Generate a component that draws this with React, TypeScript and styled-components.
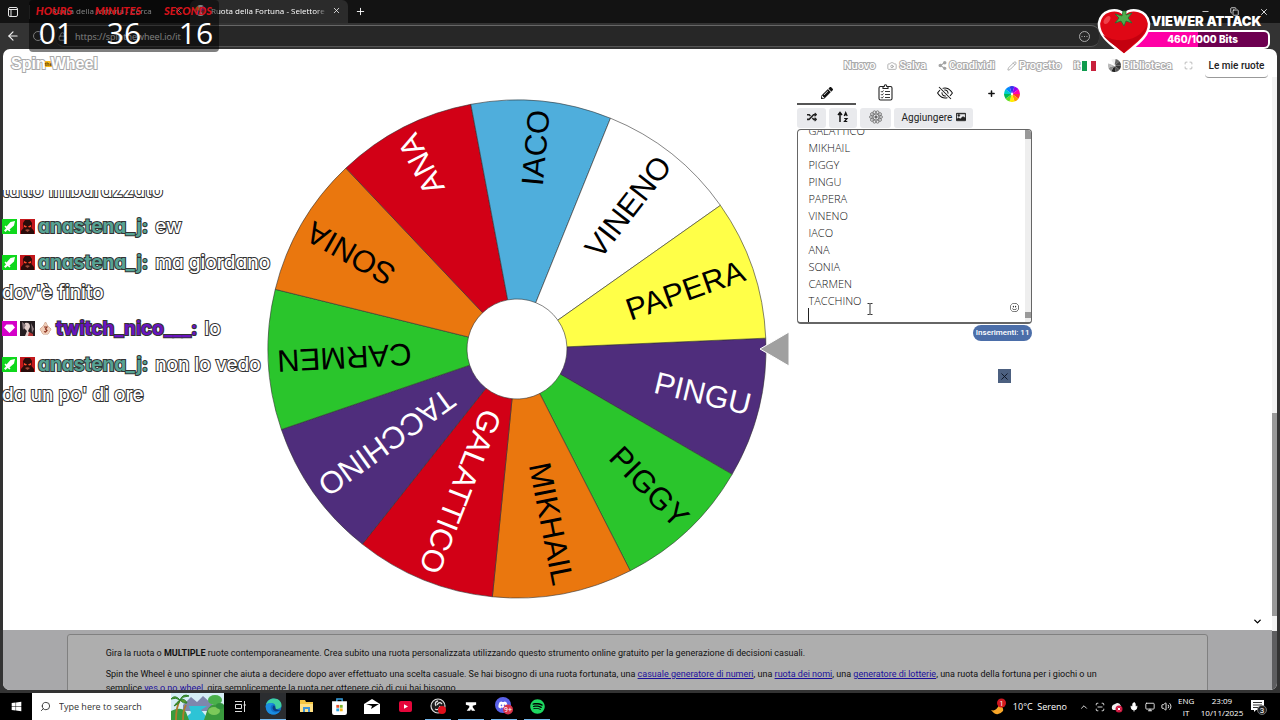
import React, { useEffect, useRef } from "react";
import styled, { createGlobalStyle } from "styled-components";
import { FaPencilAlt, FaRandom, FaShareAlt, FaSpotify, FaDiscord, FaWindows } from "react-icons/fa";
import { BsEyeSlash, BsCardImage, BsEmojiSmile } from "react-icons/bs";
import {
  ArrowLeft, RotateCw, Lock, Plus, X, Minus, Copy, Camera, Pencil, Maximize,
  ChevronDown, ChevronUp, Search, Volume2, Mic, Monitor, ScanLine,
} from "lucide-react";

const Global = createGlobalStyle`
  *, *::before, *::after { box-sizing: border-box; }
  body { margin: 0; background: #1b1b1d; font-family: Roboto, "Liberation Sans", sans-serif; }
  button, input, textarea { font: inherit; color: inherit; margin: 0; padding: 0; border: 0; background: none; }
  svg { display: block; flex: none; }
  p { margin: 0; }
`;

const Desktop = styled.div`
  position: relative;
  min-height: 100vh;
  display: flex;
  flex-direction: column;
  overflow: hidden;
`;

/* ---------- browser chrome ---------- */

const TabStrip = styled.div`
  height: 23px;
  display: flex;
  align-items: center;
  background: #131313;
  color: #fff;
  font: 8px "Open Sans", sans-serif;
  padding-left: 8px;
`;

const TabMenu = styled.div`
  width: 22px;
  height: 14px;
  display: flex;
  align-items: center;
  border-right: 1px solid #3a3a3a;
`;

const Tab = styled.div<{ $active?: boolean; $width: number }>`
  width: ${(p) => p.$width}px;
  height: 23px;
  display: flex;
  align-items: center;
  gap: 5px;
  padding: 0 7px 2px ${(p) => (p.$active ? 5 : 22)}px;
  border-radius: 6px 6px 0 0;
  background: ${(p) => (p.$active ? "#2b2b2b" : "transparent")};
  white-space: nowrap;
`;

const TabTitle = styled.span`
  flex: 1;
  overflow: hidden;
  mask-image: linear-gradient(90deg, #000 90%, transparent);
`;

const IconButton = styled.button`
  display: flex;
  align-items: center;
  justify-content: center;
`;

const NewTab = styled(IconButton)`
  margin-left: 7px;
`;

const WindowButtons = styled.div`
  margin-left: auto;
  display: flex;
  gap: 20px;
  padding-right: 11px;
`;

const AddressBar = styled.div`
  height: 26px;
  display: flex;
  align-items: center;
  gap: 12px;
  padding: 0 14px 0 6px;
  background: #333;
  color: #f0f0f0;
`;

const AddressField = styled.label`
  flex: 1;
  height: 22px;
  display: flex;
  align-items: center;
  gap: 8px;
  padding: 0 9px 0 2px;
  margin-right: 167px;
  border-top: 1px solid #666;
  border-bottom: 1px solid #555;
  border-radius: 8px;
  background: #272727;
`;

const AddressInput = styled.input`
  flex: 1;
  min-width: 0;
  font: 9px "Open Sans", sans-serif;
  color: #fff;
`;

/* ---------- page ---------- */

const Bezel = styled.div`
  flex: 1;
  display: flex;
  padding: 0 3px 3px;
  background: #333;
`;

const Page = styled.div`
  position: relative;
  flex: 1;
  min-width: 0;
  display: flex;
  flex-direction: column;
  border-radius: 7px;
  overflow: hidden;
  background: #fff;
`;

const Header = styled.header`
  height: 33px;
  display: flex;
  align-items: center;
  justify-content: space-between;
  padding: 0 9px 0 8px;
`;

const outline = `
  color: #fff;
  -webkit-text-stroke: 2px #aaa;
  paint-order: stroke fill;
`;

const Brand = styled.a`
  display: flex;
  align-items: center;
  font: bold 16px "Liberation Sans", sans-serif;
  text-decoration: none;
  padding-bottom: 4px;
  ${outline}
`;

const BrandThe = styled.small`
  width: 7px;
  margin: 0 -1px;
  font: bold 5px "Liberation Sans", sans-serif;
  color: #5b3a00;
  background: #f5b81c;
  -webkit-text-stroke: 0;
`;

const Nav = styled.nav`
  display: flex;
  align-items: center;
  gap: 12px;
`;

const NavLink = styled.a`
  display: flex;
  align-items: center;
  gap: 2px;
  font-size: 11px;
  font-weight: 500;
  text-decoration: none;
  ${outline}
  svg { color: #a4a4a4; }
`;

const Flag = styled.span`
  width: 14px;
  height: 10px;
  background: linear-gradient(90deg, #0f9b4e 33%, #fff 33% 66%, #c8203c 66%);
`;

const MyWheels = styled.button`
  width: 63px;
  height: 24px;
  border-radius: 4px;
  border-bottom: 1px solid #999;
  font-size: 10px;
  font-weight: 500;
  color: #222;
  white-space: nowrap;
`;

const Main = styled.main`
  flex: 1;
  display: flex;
  align-items: flex-start;
  gap: 8px;
  padding-left: 20.6%;
`;

const WheelSvg = styled.svg`
  width: 524px;
  height: 504px;
  margin-top: 15px;
`;

const Panel = styled.section`
  width: 235px;
  display: flex;
  flex-direction: column;
  color: #111;
`;

const PanelTabs = styled.div`
  display: flex;
  height: 23px;
  margin-bottom: 3px;
`;

const PanelTab = styled.button<{ $active?: boolean }>`
  width: 59px;
  display: flex;
  align-items: center;
  justify-content: center;
  border-bottom: 2px solid ${(p) => (p.$active ? "#555" : "transparent")};
`;

const AddWheel = styled.button`
  flex: 1;
  display: flex;
  align-items: center;
  gap: 8px;
  padding-left: 13px;
`;

const ToolRow = styled.div`
  display: flex;
  gap: 3px;
  height: 20px;
`;

const ToolButton = styled.button<{ $width: number }>`
  width: ${(p) => p.$width}px;
  display: flex;
  align-items: center;
  justify-content: center;
  gap: 4px;
  padding-bottom: 2px;
  border-radius: 3px;
  background: #e9eaed;
  font-size: 10px;
  color: #222;
`;

const EntriesBox = styled.div`
  position: relative;
  height: 195px;
  margin-top: 1px;
  border: 1px solid #666;
  border-bottom-width: 2px;
  border-radius: 4px;
  overflow: hidden;
`;

const Entries = styled.textarea`
  display: block;
  width: 100%;
  height: 100%;
  padding: 4px 10px 0;
  resize: none;
  outline: none;
  scrollbar-width: none;
  font: 300 11px/17px "Open Sans", sans-serif;
  color: #111;
  caret-color: transparent;
`;

const EntriesTrack = styled.span`
  position: absolute;
  top: 0;
  right: 0;
  bottom: 0;
  width: 6px;
  background: linear-gradient(#999 9px, #eee 9px 182px, #999 182px 188px, #eee 188px);
`;

const Caret = styled.span`
  position: absolute;
  left: 10px;
  bottom: 0;
  width: 1px;
  height: 14px;
  background: #222;
`;

const Emoji = styled.button`
  position: absolute;
  right: 12px;
  bottom: 10px;
`;

const Pointer = styled.svg`
  position: absolute;
  left: 69px;
  bottom: 7px;
`;

const Count = styled.span`
  align-self: flex-end;
  height: 16px;
  margin-top: 1px;
  padding: 0 3px;
  border-radius: 8px;
  background: #4b6ea9;
  color: #fff;
  font: 500 8px/16px Roboto, sans-serif;
`;

const CloseAd = styled.button`
  align-self: flex-end;
  width: 13px;
  height: 14px;
  margin: 28px 21px 0 0;
  display: flex;
  align-items: center;
  justify-content: center;
  background: #4c6080;
  color: #0b1220;
`;

const Expand = styled.button`
  position: absolute;
  right: 14px;
  bottom: 63px;
`;

const PageScroll = styled.span`
  position: absolute;
  top: 28px;
  right: 0;
  bottom: 0;
  width: 5px;
  background: linear-gradient(#f3f3f3 336px, #999 336px 539px, #f3f3f3 539px 554px, #5e5e60 554px);
`;

const Info = styled.section`
  height: 60px;
  padding: 4px 5.4% 0 5%;
  background: #a8a8aa;
  overflow: hidden;
`;

const InfoCard = styled.div`
  height: 70px;
  padding: 11px 96px 0 38px;
  border: 1px solid #808080;
  border-radius: 3px;
  background: #aeaeae;
  color: #111;
  font-size: 9px;
  line-height: 14px;
  p + p { margin-top: 7px; }
  a { color: #1c109c; }
`;

/* ---------- stream overlays ---------- */

const Timer = styled.div`
  position: absolute;
  top: 0;
  left: 29px;
  width: 190px;
  height: 52px;
  padding-top: 3px;
  border-radius: 4px;
  background: rgba(0, 0, 0, 0.5);
`;

const TimerLabels = styled.div`
  display: grid;
  grid-template-columns: 50px 78px 62px;
  justify-items: center;
  font: italic 900 11px/15px Lato, sans-serif;
  color: #d4121a;
`;

const TimerValues = styled.div`
  display: grid;
  grid-template-columns: 54px 82px 62px;
  justify-items: center;
  font: 30px/30px "Open Sans", sans-serif;
  color: #fff;
`;

const Attack = styled.div`
  position: absolute;
  top: 8px;
  right: 10px;
  display: flex;
  align-items: flex-start;
`;

const AttackBody = styled.div`
  width: 140px;
  margin-left: -21px;
  padding-top: 5px;
`;

const AttackTitle = styled.div`
  padding-left: 21px;
  white-space: nowrap;
  font: 900 13px/17px Inter, sans-serif;
  color: #fff;
`;

const AttackBar = styled.div`
  height: 19px;
  border: 2px solid #fff;
  border-left: 0;
  border-radius: 0 6px 6px 0;
  background: linear-gradient(90deg, #ff00a6 49%, #6d0050 49%);
  color: #fff;
  font: 800 10px/15px Inter, sans-serif;
  text-align: center;
  padding-left: 7px;
`;

const Tomato = styled.svg`
  position: relative;
  z-index: 1;
`;

const Chat = styled.div`
  position: absolute;
  top: 190px;
  left: 2px;
  width: 276px;
  height: 220px;
  display: flex;
  flex-direction: column;
  justify-content: flex-end;
  gap: 6px;
  overflow: hidden;
  font: 500 19px/30px Inter, sans-serif;
  font-feature-settings: "cv11";
  color: #fff;
  -webkit-text-stroke: 2px #333;
  paint-order: stroke fill;
`;

const Message = styled.p`
  white-space: pre-line;
`;

const User = styled.b<{ $color: string }>`
  margin-right: 2px;
  font-weight: 700;
  color: ${(p) => p.$color};
`;

const Badge = styled.svg`
  display: inline-block;
  vertical-align: -1px;
  margin-right: 3px;
`;

/* ---------- taskbar ---------- */

const Taskbar = styled.footer`
  height: 27px;
  display: flex;
  align-items: stretch;
  background: #000;
  color: #fff;
  font: 9px "Open Sans", sans-serif;
`;

const TaskButton = styled.button<{ $open?: boolean; $focus?: boolean }>`
  width: 26px;
  margin-right: 7px;
  display: flex;
  align-items: center;
  justify-content: center;
  border-bottom: 1px solid ${(p) => (p.$open ? "#76b9ed" : "transparent")};
  background: ${(p) => (p.$focus ? "#2b2d30" : "none")};
`;

const StartButton = styled.button`
  width: 26px;
  margin: 0 3px;
  display: flex;
  align-items: center;
  justify-content: center;
`;

const SearchBox = styled.label`
  width: 192px;
  margin-right: 3px;
  display: flex;
  align-items: center;
  gap: 8px;
  padding-left: 8px;
  background: #fff;
  color: #333;
`;

const SearchInput = styled.input`
  flex: 1;
  min-width: 0;
  font-size: 9px;
  &::placeholder { color: #333; opacity: 1; }
`;

const Tray = styled.div`
  margin-left: auto;
  display: flex;
  align-items: center;
  gap: 6px;
  padding-right: 13px;
`;

const Stack = styled.span<{ $width: number }>`
  width: ${(p) => p.$width}px;
  text-align: center;
  font-size: 8px;
  line-height: 12px;
`;

const Weather = styled.span`
  margin-right: 6px;
  white-space: pre;
`;

/* ---------- drawings ---------- */

const SLICES = [
  { name: "PINGU", fill: "#4f2d7c", ink: "#fff" },
  { name: "PIGGY", fill: "#2ac52c", ink: "#000" },
  { name: "MIKHAIL", fill: "#ea770e", ink: "#000" },
  { name: "GALATTICO", fill: "#d20016", ink: "#fff" },
  { name: "TACCHINO", fill: "#4f2d7c", ink: "#fff" },
  { name: "CARMEN", fill: "#2ac52c", ink: "#000" },
  { name: "SONIA", fill: "#ea770e", ink: "#000" },
  { name: "ANA", fill: "#d20016", ink: "#fff" },
  { name: "IACO", fill: "#4faedc", ink: "#000" },
  { name: "VINENO", fill: "#ffffff", ink: "#000" },
  { name: "PAPERA", fill: "#ffff48", ink: "#000" },
];

const polar = (r: number, deg: number) => {
  const a = (deg * Math.PI) / 180;
  return `${(r * Math.cos(a)).toFixed(2)} ${(r * Math.sin(a)).toFixed(2)}`;
};

function Wheel() {
  const step = 360 / SLICES.length;
  const start = -2.5;
  return (
    <WheelSvg viewBox="-252 -252 524 504" role="img" aria-label="Ruota">
      {SLICES.map((s, i) => {
        const a = start + i * step;
        return (
          <path
            key={s.name}
            d={`M${polar(50, a)}L${polar(249, a)}A249 249 0 0 1 ${polar(249, a + step)}L${polar(50, a + step)}A50 50 0 0 0 ${polar(50, a)}Z`}
            fill={s.fill}
            stroke="#333"
            strokeWidth="0.6"
          />
        );
      })}
      {SLICES.map((s, i) => (
        <text
          key={s.name}
          x="240"
          y="11"
          textAnchor="end"
          fontFamily="Liberation Sans, Arial, sans-serif"
          fontSize="31"
          fill={s.ink}
          transform={`rotate(${start + (i + 0.5) * step - 0.5})`}
        >
          {s.name}
        </text>
      ))}
      <path d="M243 0L272-17V17Z" fill="#a0a0a0" stroke="#fff" strokeWidth="1" />
    </WheelSvg>
  );
}

const HUES = ["#f33", "#f90", "#fe0", "#6d2", "#0b5", "#0cc", "#08f", "#33e", "#90e", "#f0a"];

function Pinwheel({ size, colors }: { size: number; colors: string[] }) {
  const step = 360 / colors.length;
  return (
    <svg width={size} height={size} viewBox="-10 -10 20 20">
      {colors.map((c, i) => (
        <path key={i} d={`M0 0L${polar(10, i * step)}A10 10 0 0 1 ${polar(10, (i + 1) * step)}Z`} fill={c} />
      ))}
      <circle r="1.5" fill="#fff" />
    </svg>
  );
}

const SwordBadge = () => (
  <Badge width="15" height="15" viewBox="0 0 15 15">
    <rect width="15" height="15" fill="#0fd81c" />
    <path d="M13 2L8.500 3 4.500 7.500 3.500 6.500 2.500 7.500 4 9.500 2 11.500 3.500 13 5.500 11 7.500 12.500 8.500 11.500 7.500 10.500 12 6.500Z" fill="#fff" />
  </Badge>
);

const MaskBadge = () => (
  <Badge width="15" height="15" viewBox="0 0 15 15">
    <rect width="15" height="15" fill="#c3181c" />
    <path d="M3 4L5 1H10L12 4 11.500 9 14 12V15H1V12L3.500 9Z" fill="#2a0c0a" />
    <path d="M4 6L7 7.500 6 8.500 4 8ZM11 6L8 7.500 9 8.500 11 8Z" fill="#ff4a2a" />
    <path d="M5 11Q7.500 9.500 10 11L7.500 13Z" fill="#a04a38" />
  </Badge>
);

const GemBadge = () => (
  <Badge width="15" height="15" viewBox="0 0 15 15">
    <rect width="15" height="15" fill="#d400c8" />
    <path d="M4.500 3.500H10.500L13 6.500 7.500 12 2 6.500Z" fill="#fff" />
  </Badge>
);

const PortraitBadge = () => (
  <Badge width="15" height="15" viewBox="0 0 15 15">
    <rect width="15" height="15" fill="#241d20" />
    <path d="M5 2Q10 1 10 6L8 10 12 15H5L7 10 4 7Z" fill="#e3cfcb" />
    <path d="M2 1L6 4 3 9ZM11 2L14 8 12 12Z" fill="#8d7d80" />
    <path d="M9 11L13 13V15H8Z" fill="#b23434" />
  </Badge>
);

const FlameBadge = () => (
  <Badge width="15" height="15" viewBox="0 0 15 15">
    <path d="M7.500 1L9.500 5 13 8 10 13H5L2 8 5.500 5Z" fill="#f0cdb8" stroke="#b57a5c" strokeWidth="0.8" />
    <path d="M6 6H9L7.500 8 9 9.500 7.500 11 6 10.500" fill="none" stroke="#8a3320" strokeWidth="1.200" />
  </Badge>
);

const ChecklistIcon = () => (
  <svg width="15" height="17" viewBox="0 0 15 17" fill="none" stroke="#222" strokeWidth="1.100">
    <rect x="1" y="2.500" width="13" height="13.500" rx="1.500" />
    <path d="M5 4.500V2.500H6.200Q6.200 0.800 7.500 0.800T8.800 2.500H10V4.500Z" fill="#fff" />
    <path d="M3 7.200L4 8.200 5.500 6.500M3 10.200L4 11.200 5.500 9.500M3 13.200L4 14.200 5.500 12.500M7 7.500H12M7 10.500H12M7 13.500H12" strokeWidth="0.900" />
  </svg>
);

const SortIcon = () => (
  <svg width="12" height="12" viewBox="0 0 12 12" fill="none" stroke="#111" strokeWidth="1.500">
    <path d="M3 11V2M1 4L3 1.500 5 4" />
    <path d="M7.200 5L8.700 1.500 10.200 5M7.800 4H9.600M7.200 7.500H10L7.500 10.500H10.300" strokeWidth="1.200" />
  </svg>
);

const FlowerIcon = () => (
  <svg width="14" height="14" viewBox="-7 -7 14 14" fill="none" stroke="#666" strokeWidth="0.8">
    {Array.from({ length: 10 }, (_, i) => (
      <circle key={i} r="1.400" cx={5 * Math.cos((i * Math.PI) / 5)} cy={5 * Math.sin((i * Math.PI) / 5)} />
    ))}
    <circle r="3" />
    <circle r="1.200" fill="#666" />
  </svg>
);

const TomatoArt = () => (
  <Tomato width="54" height="49" viewBox="0 0 54 49">
    <path d="M27 6C19-1 4 2 2 15 1 29 17 38 27 47 37 38 53 29 52 15 50 2 35-1 27 6Z" fill="#df0715" stroke="#fff" strokeWidth="2.500" />
    <path d="M50 17C48 30 34 37 27 45 19 38 11 34 6 27 20 36 42 34 50 17Z" fill="#c4000f" />
    <ellipse cx="10" cy="12" rx="2.500" ry="4.500" transform="rotate(35 10 12)" fill="#f0404a" />
    <path d="M26 3L29 3 29 7 35 5 31 10 35 15 29 13 27 18 24 13 18 15 22 10 18 6 25 8Z" fill="#4fae4b" stroke="#1e7231" strokeWidth="0.8" />
  </Tomato>
);

const SearchScene = () => (
  <svg width="53" height="27" viewBox="0 0 53 27">
    <rect width="53" height="27" fill="#d5edf6" />
    <path d="M12 12L20 4 26 9 32 3 42 12V18H12Z" fill="#7f87ad" />
    <path d="M18 13H36L30 17 38 27H12L20 20Z" fill="#2dc4d6" />
    <path d="M0 18Q10 13 15 19L18 27H0ZM53 12Q40 8 36 18L33 27H53Z" fill="#3a9a3d" />
    <path d="M5 27Q5 14 9 7M12 27Q12 17 15 12" stroke="#b07b2b" strokeWidth="1.800" fill="none" />
    <path d="M9 7Q4 1 0 6 5 4 9 7 6 9 3 13 9 11 9 7 12 11 16 10 14 5 9 7 12 0 18 3 12 3 9 7Z" fill="#5b9a2b" stroke="#2b7f2b" />
    <ellipse cx="44" cy="7" rx="7" ry="5" fill="#49b04b" />
    <ellipse cx="43" cy="18" rx="6" ry="4" fill="#7cc95a" />
    <ellipse cx="49" cy="13" rx="4" ry="3" fill="#2f8f3c" />
  </svg>
);

const EdgeIcon = () => (
  <svg width="17" height="17" viewBox="0 0 17 17">
    <circle cx="8.500" cy="8.500" r="8" fill="#0f6fc9" />
    <path d="M1 7C2 2 6 .5 9 .5 14 .5 16.500 4 16.500 7 16.500 10 14 11 11 11 9.500 11 10.500 9.500 10.500 8.500 10.500 6 8 5 6 5 3.500 5 2 6 1 7Z" fill="#3fd0a0" />
    <path d="M1 7C3 4 8 4.500 9 6.500 6 6 5 9 6 11.500 7 14.500 11 15.500 15 13 12 17.500 6 17.500 3 14.500 1 12 .5 9 1 7Z" fill="#1b8de0" />
    <path d="M9 7.500C7 8 7 12 10 13 12 13.500 14 13 15.500 12 13 12 10 11.500 10.300 9Z" fill="#0b3d7e" />
  </svg>
);

const FolderIcon = () => (
  <svg width="15" height="14" viewBox="0 0 15 14">
    <path d="M1 1H6L7 3H14V13H1Z" fill="#f4c542" />
    <path d="M1 5H14V13H1Z" fill="#ffe084" />
    <path d="M4 13V8H11V13H9V10H6V13Z" fill="#3f94d6" />
  </svg>
);

const StoreIcon = () => (
  <svg width="15" height="17" viewBox="0 0 14 16">
    <path d="M4.500 4V1H9.500V4" fill="none" stroke="#37a0e0" strokeWidth="1.300" />
    <path d="M0 3H14V14Q14 16 12 16H2Q0 16 0 14Z" fill="#fff" />
    <path d="M4 6.500H6.700V9.200H4Z" fill="#e8502d" /><path d="M7.300 6.500H10V9.200H7.300Z" fill="#7db72f" />
    <path d="M4 9.800H6.700V12.500H4Z" fill="#29a3e2" /><path d="M7.300 9.800H10V12.500H7.300Z" fill="#f8b617" />
  </svg>
);

const MailIcon = () => (
  <svg width="18" height="15" viewBox="0 0 18 15">
    <path d="M1 5L9 0 17 5V15H1Z" fill="#fff" />
    <path d="M3 5H16L8 10 9 7Z" fill="#000" />
  </svg>
);

const YouTubeIcon = () => (
  <svg width="13" height="11" viewBox="0 0 13 11">
    <rect width="13" height="11" rx="2" fill="#e5063a" />
    <path d="M5 3.300L9 5.500 5 7.700Z" fill="#fff" />
  </svg>
);

const ObsIcon = () => (
  <svg width="17" height="17" viewBox="0 0 17 17">
    <circle cx="8" cy="8" r="7" fill="#1c1c1c" stroke="#ddd" strokeWidth="1.200" />
    <path d="M8 3Q4 4 6 8M12 6Q9 3 7 7M5 11Q9 13 10 8" stroke="#ddd" strokeWidth="1.300" fill="none" />
    <circle cx="12" cy="12" r="4" fill="#e0101c" />
  </svg>
);

const HammerIcon = () => (
  <svg width="12" height="11" viewBox="0 0 14 12" fill="#fff">
    <path d="M1 1H13V4L9 5V7L12 11H8L7 9 6 11H2L5 7V5L1 4Z" />
  </svg>
);

const DiscordBadge = () => (
  <svg width="18" height="18" viewBox="0 0 18 18">
    <circle cx="8" cy="8" r="8" fill="#5a62e8" />
    <FaDiscord x="3" y="3" size={10} color="#fff" />
    <circle cx="13" cy="12.500" r="5" fill="#d8324a" />
    <text x="13" y="15" fontSize="7" fontFamily="Roboto" textAnchor="middle" fill="#fff">9+</text>
  </svg>
);

const MoonIcon = () => (
  <svg width="17" height="18" viewBox="0 0 17 18">
    <path d="M1 12Q6 14 9 7 14 9 13 13 7 20 1 12Z" fill="#f8a628" />
    <circle cx="11.500" cy="5" r="4.500" fill="#d01720" />
    <text x="11.500" y="7.500" fontSize="7" fontFamily="Roboto" textAnchor="middle" fill="#fff">1</text>
  </svg>
);

const CloudIcon = () => (
  <svg width="12" height="12" viewBox="0 0 12 12">
    <path d="M1 8Q0 4 4 3 8 0 10 5V9H2Z" fill="#eee" />
    <circle cx="8" cy="8" r="3.500" fill="#d01840" />
    <path d="M6.800 6.800L9.200 9.200M9.200 6.800L6.800 9.200" stroke="#fff" />
  </svg>
);

const NoticeIcon = () => (
  <svg width="17" height="17" viewBox="0 0 17 17">
    <path d="M1 2H14V12H6L4 14V12H1Z" fill="#fff" />
    <path d="M3 4.500H12M3 7H12M3 9.500H8" stroke="#333" />
    <circle cx="12" cy="12" r="4.500" fill="#222" stroke="#888" strokeWidth="0.8" />
    <text x="12" y="15" fontSize="8" fontFamily="Roboto" textAnchor="middle" fill="#fff">3</text>
  </svg>
);

const ENTRIES = "GALATTICO\nMIKHAIL\nPIGGY\nPINGU\nPAPERA\nVINENO\nIACO\nANA\nSONIA\nCARMEN\nTACCHINO\n";

export default function App() {
  const entries = useRef<HTMLTextAreaElement>(null);
  useEffect(() => {
    if (entries.current) entries.current.scrollTop = 12;
  }, []);

  return (
    <Desktop>
      <Global />
      <TabStrip>
        <TabMenu>
          <svg width="10" height="10" viewBox="0 0 10 10" fill="none" stroke="#e4e4e4">
            <rect x="0.500" y="0.500" width="9" height="9" rx="1.500" />
            <path d="M1 2.500H9M3 3V9" />
          </svg>
        </TabMenu>
        <Tab $width={160}>
          <TabTitle>Ruota della fortuna - Cerca</TabTitle>
          <IconButton aria-label="Chiudi scheda"><X size={9} /></IconButton>
        </Tab>
        <Tab $width={158} $active>
          <Pinwheel size={11} colors={["#d33", "#fff", "#36c", "#fb3", "#fff", "#c3a"]} />
          <TabTitle>Ruota della Fortuna - Selettore Per</TabTitle>
          <IconButton aria-label="Chiudi scheda"><X size={9} /></IconButton>
        </Tab>
        <NewTab aria-label="Nuova scheda"><Plus size={11} /></NewTab>
        <WindowButtons>
          <IconButton aria-label="Riduci"><Minus size={9} /></IconButton>
          <IconButton aria-label="Ripristina"><Copy size={9} /></IconButton>
          <IconButton aria-label="Chiudi"><X size={10} /></IconButton>
        </WindowButtons>
      </TabStrip>
      <AddressBar>
        <IconButton aria-label="Indietro"><ArrowLeft size={14} /></IconButton>
        <IconButton aria-label="Ricarica"><RotateCw size={12} /></IconButton>
        <AddressField>
          <Lock size={9} />
          <AddressInput aria-label="Indirizzo" defaultValue="https://spinthewheel.io/it" />
          <svg width="11" height="11" viewBox="0 0 11 11" fill="none" stroke="#aaa">
            <circle cx="5.500" cy="5.500" r="5" />
            <path d="M2.500 5.500H8.500" strokeDasharray="1 1.500" />
          </svg>
        </AddressField>
      </AddressBar>

      <Bezel>
        <Page>
          <Header>
            <Brand href="#">Spin<BrandThe>the</BrandThe>Wheel</Brand>
            <Nav>
              <NavLink href="#">Nuovo</NavLink>
              <NavLink href="#"><Camera size={10} />Salva</NavLink>
              <NavLink href="#"><FaShareAlt size={9} />Condividi</NavLink>
              <NavLink href="#"><Pencil size={10} />Progetto</NavLink>
              <NavLink href="#">it<Flag /></NavLink>
              <NavLink href="#">
                <Pinwheel size={13} colors={["#333", "#555", "#222", "#888", "#bbb", "#fff", "#eee", "#666", "#444"]} />
                Biblioteca
              </NavLink>
              <NavLink href="#" aria-label="Schermo intero"><Maximize size={9} /></NavLink>
              <MyWheels>Le mie ruote</MyWheels>
            </Nav>
          </Header>
          <Main>
            <Wheel />
            <Panel>
              <PanelTabs>
                <PanelTab $active aria-label="Modifica"><FaPencilAlt size={12} /></PanelTab>
                <PanelTab aria-label="Risultati"><ChecklistIcon /></PanelTab>
                <PanelTab aria-label="Nascondi"><BsEyeSlash size={16} /></PanelTab>
                <AddWheel aria-label="Aggiungi ruota">
                  <Plus size={9} strokeWidth={4} />
                  <Pinwheel size={16} colors={HUES} />
                </AddWheel>
              </PanelTabs>
              <ToolRow>
                <ToolButton $width={29} aria-label="Mescola"><FaRandom size={10} /></ToolButton>
                <ToolButton $width={28} aria-label="Ordina"><SortIcon /></ToolButton>
                <ToolButton $width={31} aria-label="Impostazioni"><FlowerIcon /></ToolButton>
                <ToolButton $width={79}>Aggiungere <BsCardImage size={10} strokeWidth={1} /></ToolButton>
              </ToolRow>
              <EntriesBox>
                <Entries ref={entries} aria-label="Inserimenti" defaultValue={ENTRIES} spellCheck={false} />
                <Caret />
                <Pointer width="6" height="12" viewBox="0 0 6 12" fill="none" stroke="#333">
                  <path d="M0.500 0.500H2.500L3 1 3.500 0.500H5.500M3 1V11M0.500 11.500H2.500L3 11 3.500 11.500H5.500" />
                </Pointer>
                <Emoji aria-label="Emoji"><BsEmojiSmile size={9} /></Emoji>
                <EntriesTrack />
              </EntriesBox>
              <Count>Inserimenti: 11</Count>
              <CloseAd aria-label="Chiudi"><X size={11} /></CloseAd>
            </Panel>
          </Main>
          <Info>
            <InfoCard>
              <p>
                Gira la ruota o <b>MULTIPLE</b> ruote contemporaneamente. Crea subito una ruota personalizzata
                utilizzando questo strumento online gratuito per la generazione di decisioni casuali.
              </p>
              <p>
                Spin the Wheel è uno spinner che aiuta a decidere dopo aver effettuato una scelta casuale. Se hai
                bisogno di una ruota fortunata, una <a href="#">casuale generatore di numeri</a>, una{" "}
                <a href="#">ruota dei nomi</a>, una <a href="#">generatore di lotterie</a>, una ruota della fortuna
                per i giochi o un semplice <a href="#">yes o no wheel</a>, gira semplicemente la ruota per ottenere
                ciò di cui hai bisogno.
              </p>
            </InfoCard>
          </Info>
          <Expand aria-label="Espandi"><ChevronDown size={11} strokeWidth={3} /></Expand>
          <PageScroll />
        </Page>
      </Bezel>

      <Taskbar>
        <StartButton aria-label="Start"><FaWindows size={11} /></StartButton>
        <SearchBox>
          <Search size={11} transform="scale(-1 1)" />
          <SearchInput placeholder="Type here to search" aria-label="Type here to search" />
          <SearchScene />
        </SearchBox>
        <TaskButton aria-label="Task view">
          <svg width="11" height="11" viewBox="0 0 11 11" fill="none" stroke="#ddd">
            <path d="M0 .5H7M0 10.500H7M.5 3.500H6.500V7.500H.5ZM9.500 0V11M8.500 4H11" />
          </svg>
        </TaskButton>
        <TaskButton aria-label="Edge" $open $focus><EdgeIcon /></TaskButton>
        <TaskButton aria-label="Esplora file"><FolderIcon /></TaskButton>
        <TaskButton aria-label="Store"><StoreIcon /></TaskButton>
        <TaskButton aria-label="Posta"><MailIcon /></TaskButton>
        <TaskButton aria-label="YouTube"><YouTubeIcon /></TaskButton>
        <TaskButton aria-label="OBS" $open><ObsIcon /></TaskButton>
        <TaskButton aria-label="Streaming" $open><HammerIcon /></TaskButton>
        <TaskButton aria-label="Discord" $open><DiscordBadge /></TaskButton>
        <TaskButton aria-label="Spotify" $open><FaSpotify size={15} color="#1ed760" /></TaskButton>
        <Tray>
          <MoonIcon />
          <Weather>10°C  Sereno</Weather>
          <ChevronUp size={10} />
          <ScanLine size={10} />
          <CloudIcon />
          <Mic size={10} fill="#fff" />
          <Monitor size={10} />
          <Volume2 size={11} />
          <Stack $width={16}>ENG<br />IT</Stack>
          <Stack $width={44}>23:09<br />10/11/2025</Stack>
          <NoticeIcon />
        </Tray>
      </Taskbar>

      <Chat>
        <Message>tutto imbarazzato</Message>
        <Message><SwordBadge /><MaskBadge /><User $color="#57a394">anastena_j:</User> ew</Message>
        <Message><SwordBadge /><MaskBadge /><User $color="#57a394">anastena_j:</User>{" ma giordano\ndov'è finito"}</Message>
        <Message><GemBadge /><PortraitBadge /><FlameBadge /><User $color="#6a14c0">twitch_nico___:</User> lo</Message>
        <Message><SwordBadge /><MaskBadge /><User $color="#57a394">anastena_j:</User>{" non lo vedo\nda un po' di ore"}</Message>
      </Chat>

      <Timer>
        <TimerLabels>
          <span>HOURS</span>
          <span>MINUTES</span>
          <span>SECONDS</span>
        </TimerLabels>
        <TimerValues>
          <span>01</span>
          <span>36</span>
          <span>16</span>
        </TimerValues>
      </Timer>

      <Attack>
        <TomatoArt />
        <AttackBody>
          <AttackTitle>VIEWER ATTACK</AttackTitle>
          <AttackBar>460/1000 Bits</AttackBar>
        </AttackBody>
      </Attack>
    </Desktop>
  );
}
